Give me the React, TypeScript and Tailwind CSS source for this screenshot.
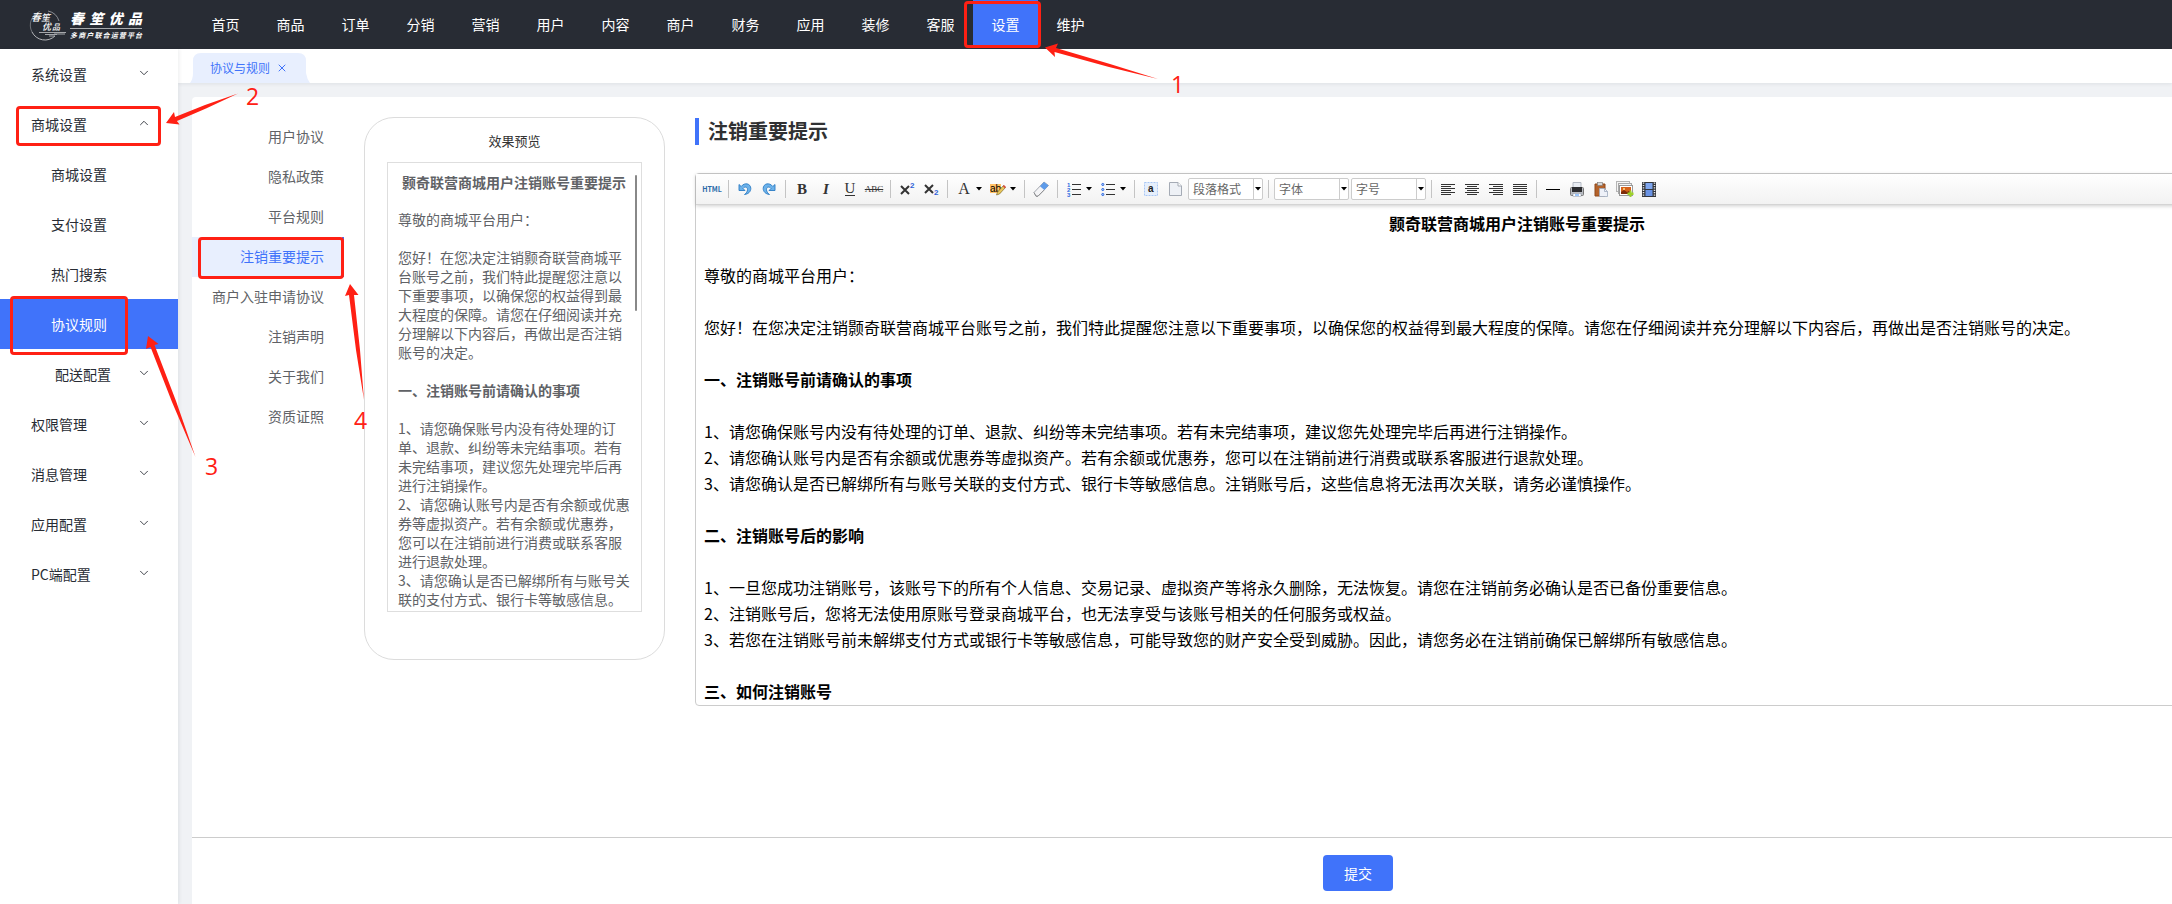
import React from 'react';
import { ChevronDown, ChevronUp, X } from 'lucide-react';

const navItems = ['首页', '商品', '订单', '分销', '营销', '用户', '内容', '商户', '财务', '应用', '装修', '客服', '设置', '维护'];

const sideItems = [
  { label: '系统设置', pad: 'pl-[31px]', arrow: 'down' },
  { label: '商城设置', pad: 'pl-[31px]', arrow: 'up' },
  { label: '商城设置', pad: 'pl-[51px]' },
  { label: '支付设置', pad: 'pl-[51px]' },
  { label: '热门搜索', pad: 'pl-[51px]' },
  { label: '协议规则', pad: 'pl-[51px]', active: true },
  { label: '配送配置', pad: 'pl-[55px]', arrow: 'down' },
  { label: '权限管理', pad: 'pl-[31px]', arrow: 'down' },
  { label: '消息管理', pad: 'pl-[31px]', arrow: 'down' },
  { label: '应用配置', pad: 'pl-[31px]', arrow: 'down' },
  { label: 'PC端配置', pad: 'pl-[31px]', arrow: 'down' },
];

const agreements = ['用户协议', '隐私政策', '平台规则', '注销重要提示', '商户入驻申请协议', '注销声明', '关于我们', '资质证照'];

const previewLines = [
  '尊敬的商城平台用户：',
  '',
  '您好！在您决定注销颢奇联营商城平',
  '台账号之前，我们特此提醒您注意以',
  '下重要事项，以确保您的权益得到最',
  '大程度的保障。请您在仔细阅读并充',
  '分理解以下内容后，再做出是否注销',
  '账号的决定。',
  '',
  '#一、注销账号前请确认的事项',
  '',
  '1、请您确保账号内没有待处理的订',
  '单、退款、纠纷等未完结事项。若有',
  '未完结事项，建议您先处理完毕后再',
  '进行注销操作。',
  '2、请您确认账号内是否有余额或优惠',
  '券等虚拟资产。若有余额或优惠券，',
  '您可以在注销前进行消费或联系客服',
  '进行退款处理。',
  '3、请您确认是否已解绑所有与账号关',
  '联的支付方式、银行卡等敏感信息。',
];

const editorLines = [
  '尊敬的商城平台用户：',
  '',
  '您好！在您决定注销颢奇联营商城平台账号之前，我们特此提醒您注意以下重要事项，以确保您的权益得到最大程度的保障。请您在仔细阅读并充分理解以下内容后，再做出是否注销账号的决定。',
  '',
  '#一、注销账号前请确认的事项',
  '',
  '1、请您确保账号内没有待处理的订单、退款、纠纷等未完结事项。若有未完结事项，建议您先处理完毕后再进行注销操作。',
  '2、请您确认账号内是否有余额或优惠券等虚拟资产。若有余额或优惠券，您可以在注销前进行消费或联系客服进行退款处理。',
  '3、请您确认是否已解绑所有与账号关联的支付方式、银行卡等敏感信息。注销账号后，这些信息将无法再次关联，请务必谨慎操作。',
  '',
  '#二、注销账号后的影响',
  '',
  '1、一旦您成功注销账号，该账号下的所有个人信息、交易记录、虚拟资产等将永久删除，无法恢复。请您在注销前务必确认是否已备份重要信息。',
  '2、注销账号后，您将无法使用原账号登录商城平台，也无法享受与该账号相关的任何服务或权益。',
  '3、若您在注销账号前未解绑支付方式或银行卡等敏感信息，可能导致您的财产安全受到威胁。因此，请您务必在注销前确保已解绑所有敏感信息。',
  '',
  '#三、如何注销账号',
];

function Lines({ lines, className }: { lines: string[]; className: string }) {
  return (
    <>
      {lines.map((line, i) => (
        <p key={i} className={`${className} ${line.startsWith('#') ? 'font-bold' : ''}`}>
          {line.replace('#', '')}
        </p>
      ))}
    </>
  );
}

function Logo() {
  return (
    <a href="#" aria-label="春笙优品" className="flex w-[193px] shrink-0 items-center gap-1 pl-[29px] text-white">
      <svg width="37" height="34" viewBox="0 0 37 34" fill="none">
        <path d="M11 3.5A14.5 14.5 0 0 0 3 24" stroke="#6f7278" strokeWidth="1" />
        <path d="M3 24A14.5 14.5 0 0 0 26 28" stroke="#b5b6ba" strokeWidth="1" />
        <path d="M19 3A14.5 14.5 0 0 1 30 13" stroke="#8b8e94" strokeWidth="1" />
        <g fill="#fff" fontFamily="'Noto Sans CJK SC', sans-serif" fontStyle="italic" fontWeight="500">
          <text x="2" y="13" fontSize="10">春</text>
          <text x="12" y="13" fontSize="9">笙</text>
          <text x="13" y="22" fontSize="9">优</text>
          <text x="23" y="22" fontSize="8">品</text>
        </g>
        <path d="M10 24.5h27M16 26.5h12M20 28h6M25 26h11" stroke="#a5a7ab" strokeWidth="1" />
      </svg>
      <div className="flex w-[72px] flex-col">
        <div className="flex justify-between text-[14px] leading-[16px] font-black italic">
          <span>春</span><span>笙</span><span>优</span><span>品</span>
        </div>
        <div className="my-[2px] h-px bg-[#a9abae]" />
        <div className="flex justify-between text-[7px] leading-[9px] font-bold italic">
          {Array.from('多商户联合运营平台').map((c) => (
            <span key={c}>{c}</span>
          ))}
        </div>
      </div>
    </a>
  );
}

function Tool({ label, children }: { label: string; children: React.ReactNode }) {
  return (
    <button type="button" aria-label={label} title={label} className="flex h-5 w-6 shrink-0 items-center justify-center text-[#333]">
      {children}
    </button>
  );
}

function SplitTool({ label, children }: { label: string; children: React.ReactNode }) {
  return (
    <button type="button" aria-label={label} title={label} className="flex h-5 w-[34px] shrink-0 items-center text-[#333]">
      <span className="flex w-6 justify-center">{children}</span>
      <Caret />
    </button>
  );
}

function Caret() {
  return (
    <svg width="6" height="4" viewBox="0 0 6 4" className="shrink-0">
      <path d="M0 0h6L3 3.5z" fill="#000" />
    </svg>
  );
}

function Sep() {
  return <span className="mx-1 h-[18px] w-px shrink-0 bg-[#c4c4c4]" />;
}

function ToolSelect({ label }: { label: string }) {
  return (
    <span className="relative mx-px h-[22px] w-[75px] shrink-0 rounded-xs border border-[#ccc] bg-white">
      <select aria-label={label} className="block h-5 w-full appearance-none bg-transparent pl-1 text-[12px] leading-5 text-[#666]">
        <option>{label}</option>
      </select>
      <span className="pointer-events-none absolute inset-y-0 right-0 flex w-[9px] items-center justify-center border-l border-[#ccc]">
        <Caret />
      </span>
    </span>
  );
}

function AlignIcon({ kind }: { kind: 'left' | 'center' | 'right' | 'full' }) {
  const x = { left: 0, center: 2, right: 4, full: 0 }[kind];
  const w = kind === 'full' ? 14 : 10;
  return (
    <svg width="14" height="11" viewBox="0 0 14 11" fill="#333">
      {[0, 2, 4, 6, 8, 10].map((y, i) => (
        <rect key={y} x={i % 2 ? x : 0} y={y} width={i % 2 ? w : 14} height="1" />
      ))}
    </svg>
  );
}

function UndoIcon({ flip }: { flip?: boolean }) {
  return (
    <svg width="14" height="14" viewBox="0 0 14 14" className={flip ? '-scale-x-100' : ''}>
      <path
        d="M1 2.5v6h6L5 6.5C6.5 4.5 9.5 4.5 9.5 7.5C9.5 9.5 8.5 11 6.5 12.5C10.5 12 12.8 9.5 12.8 6.5C12.8 1.5 6.5 0 3.2 4.5z"
        fill="#6cb2ea"
        stroke="#2b7cc4"
        strokeWidth="0.9"
        strokeLinejoin="round"
      />
    </svg>
  );
}

function Toolbar() {
  return (
    <div className="flex h-[31px] items-center border-b border-[#d4d4d4] bg-linear-to-b from-white to-[#f2f2f2] pl-1 shadow-[0_1px_4px_rgba(0,0,0,0.2)]">
      <Tool label="源代码"><span className="text-[7px] leading-none font-bold text-[#2a6aa8]">HTML</span></Tool>
      <Sep />
      <Tool label="撤销"><UndoIcon /></Tool>
      <Tool label="重做"><UndoIcon flip /></Tool>
      <Sep />
      <Tool label="加粗"><span className="font-['Liberation_Serif',serif] text-[15px] leading-5 font-bold">B</span></Tool>
      <Tool label="斜体"><span className="font-['Liberation_Serif',serif] text-[15px] leading-5 font-bold italic">I</span></Tool>
      <Tool label="下划线"><span className="border-b border-[#333] font-['Liberation_Serif',serif] text-[15px] leading-[13px]">U</span></Tool>
      <Tool label="删除线"><span className="font-['Liberation_Serif',serif] text-[9px] leading-5 line-through">ABC</span></Tool>
      <Sep />
      <Tool label="上标">
        <svg width="16" height="16" viewBox="0 0 16 16">
          <path d="M2 5l8 8M10 5l-8 8" stroke="#333" strokeWidth="2" />
          <text x="11" y="7" fontSize="8" fontWeight="700" fill="#2f5fd8" fontFamily="'Liberation Sans', sans-serif">2</text>
        </svg>
      </Tool>
      <Tool label="下标">
        <svg width="16" height="16" viewBox="0 0 16 16">
          <path d="M2 4l8 8M10 4l-8 8" stroke="#333" strokeWidth="2" />
          <text x="11" y="14" fontSize="8" fontWeight="700" fill="#2f5fd8" fontFamily="'Liberation Sans', sans-serif">2</text>
        </svg>
      </Tool>
      <Sep />
      <SplitTool label="字体颜色"><span className="font-['Liberation_Serif',serif] text-[16px] leading-5">A</span></SplitTool>
      <SplitTool label="背景色">
        <svg width="16" height="16" viewBox="0 0 16 16">
          <rect x="0" y="3" width="11" height="9" fill="#ffc166" />
          <text x="0" y="11" fontSize="10" fill="#000" fontFamily="'Liberation Sans', sans-serif">ab</text>
          <path d="M6.5 14l1-3 6-6.500 2 2-6 6.500z" fill="#e8c65a" stroke="#6b5a22" strokeWidth="0.6" />
          <path d="M12.8 5.2l1.200-1.200 2 2-1.200 1.200z" fill="#d9493f" />
        </svg>
      </SplitTool>
      <Sep />
      <Tool label="清除格式">
        <svg width="16" height="16" viewBox="0 0 16 16">
          <path d="M1 11.5L11 1l4.500 3.500L5 15.200H3z" fill="#f4f4f6" stroke="#8a8f98" strokeWidth="0.8" />
          <path d="M7 5.2L11 1l4.500 3.500-4.200 4.500z" fill="#5d9bea" />
          <path d="M1 11.5L3 15.200H5l6-6" fill="none" stroke="#888" strokeWidth="0.8" />
        </svg>
      </Tool>
      <Sep />
      <SplitTool label="有序列表">
        <svg width="14" height="15" viewBox="0 0 14 15">
          <g fill="#2f6be0" fontSize="6" fontWeight="700" fontFamily="'Liberation Sans', sans-serif">
            <text x="0" y="5">1</text>
            <text x="0" y="10">2</text>
            <text x="0" y="15">3</text>
          </g>
          <path d="M5 2.5h9M5 7.5h9M5 12.5h9" stroke="#333" />
        </svg>
      </SplitTool>
      <SplitTool label="无序列表">
        <svg width="14" height="15" viewBox="0 0 14 15">
          <g fill="#a9c6f8" stroke="#2f6be0">
            <circle cx="1.8" cy="2.5" r="1.1" />
            <circle cx="1.8" cy="7.5" r="1.1" />
            <circle cx="1.8" cy="12.5" r="1.1" />
          </g>
          <path d="M5 2.5h9M5 7.5h9M5 12.5h9" stroke="#333" />
        </svg>
      </SplitTool>
      <Sep />
      <Tool label="全选">
        <svg width="14" height="14" viewBox="0 0 14 14">
          <rect x="0.5" y="0.5" width="13" height="13" fill="#e6effc" stroke="#a9c7f5" strokeDasharray="2 1" />
          <text x="4" y="10" fontSize="10" fontWeight="700" fill="#222" fontFamily="'Liberation Sans', sans-serif">a</text>
        </svg>
      </Tool>
      <Tool label="清空文档">
        <svg width="13" height="14" viewBox="0 0 13 14">
          <path d="M0.5 0.5h8.500l3.500 3.500v9.500h-12z" fill="#eef1f6" stroke="#a5abb5" />
          <path d="M9 0.5v3.500h3.500" fill="#fff" stroke="#a5abb5" />
        </svg>
      </Tool>
      <ToolSelect label="段落格式" />
      <Sep />
      <ToolSelect label="字体" />
      <ToolSelect label="字号" />
      <Sep />
      <Tool label="居左对齐"><AlignIcon kind="left" /></Tool>
      <Tool label="居中对齐"><AlignIcon kind="center" /></Tool>
      <Tool label="居右对齐"><AlignIcon kind="right" /></Tool>
      <Tool label="两端对齐"><AlignIcon kind="full" /></Tool>
      <Sep />
      <Tool label="分隔线"><span className="h-px w-[14px] bg-black" /></Tool>
      <Tool label="打印">
        <svg width="14" height="15" viewBox="0 0 14 15">
          <path d="M3 0.5h8v5h-8z" fill="#e9edf3" stroke="#b4bac4" />
          <rect x="0.5" y="5.5" width="13" height="8" rx="1" fill="#b9bcc2" stroke="#777" />
          <rect x="2" y="5" width="10" height="5" fill="#2c2d30" />
          <rect x="3" y="11.5" width="8" height="3" fill="#fff" stroke="#8a94a5" strokeWidth="0.5" />
          <rect x="5" y="12.5" width="4" height="1" fill="#3d8df5" />
        </svg>
      </Tool>
      <Tool label="粘贴">
        <svg width="14" height="15" viewBox="0 0 14 15">
          <path d="M1 2h10v12h-10z" fill="#b4622a" stroke="#8f481b" />
          <rect x="3.5" y="0.5" width="5" height="3" fill="#d9d9d9" stroke="#777" strokeWidth="0.6" />
          <path d="M5.5 6.5h5l3 3v5h-8z" fill="#eef1f8" stroke="#9da9bd" strokeWidth="0.8" />
          <path d="M10.5 6.5v3h3" fill="none" stroke="#9da9bd" strokeWidth="0.8" />
        </svg>
      </Tool>
      <Tool label="图片">
        <svg width="18" height="16" viewBox="0 0 18 16">
          <rect x="0.5" y="0.5" width="13" height="10" fill="#f4f4f4" stroke="#b5b5b5" />
          <rect x="2.5" y="2.5" width="13" height="10" fill="#f4f4f4" stroke="#a8a8a8" />
          <rect x="3.5" y="4.5" width="13" height="10" fill="#fff" stroke="#999" />
          <rect x="5" y="6" width="10" height="7" fill="#d5611b" />
          <path d="M5 13v-2l3-2 3 2 2-1 2 1v2z" fill="#7d2c0b" />
          <circle cx="8" cy="8" r="1" fill="#ffe08a" />
          <path d="M13.5 9.5h2v2h2v2.500h-2v2h-2v-2h-2v-2.500h2z" fill="#9ed22b" />
        </svg>
      </Tool>
      <Tool label="视频">
        <svg width="14" height="15" viewBox="0 0 14 15">
          <rect x="0" y="0" width="14" height="15" fill="#33363c" />
          <rect x="3.5" y="1" width="7" height="6" fill="#7fa6ee" />
          <rect x="3.5" y="8" width="7" height="6" fill="#6a93e4" />
          <path d="M1.5 0.5v14M12.5 0.5v14" stroke="#e8e8e8" strokeWidth="1.5" strokeDasharray="1.2 1.2" />
        </svg>
      </Tool>
    </div>
  );
}

/* Numbered steps drawn on top of the page */
function Guide() {
  return (
    <div className="pointer-events-none absolute top-0 left-0 z-20">
      <div className="absolute top-[1px] left-[964px] h-[47px] w-[77px] rounded-sm border-3 border-[#ff2014]" />
      <div className="absolute top-[106px] left-[16px] h-[40px] w-[145px] rounded-sm border-3 border-[#ff2014]" />
      <div className="absolute top-[296px] left-[10px] h-[59px] w-[118px] rounded-sm border-3 border-[#ff2014]" />
      <div className="absolute top-[237px] left-[198px] h-[42px] w-[146px] rounded-sm border-3 border-[#ff2014]" />
      <svg width="1200" height="500" viewBox="0 0 1200 500" className="max-w-none" fill="#ff2014">
        <path d="M1045 47.5L1058 43.5L1056 48L1110 64L1158 79L1109 67L1054.5 52L1055 57z" />
        <path d="M166 123L174 112L175 117L205 105L238 93.5L206 108.5L177 121L179.5 124.5z" />
        <path d="M148 336L158.5 344L154.5 345L176 401L195.5 457L172 402L150.5 347L146 349z" />
        <path d="M350 284L358.5 295L354 295L360 350L364 400L356 350L349 295L345 296z" />
        <g fontSize="23" fontFamily="'Open Sans', 'Noto Sans', sans-serif">
          <text x="1171" y="93">1</text>
          <text x="246" y="105">2</text>
          <text x="205" y="475">3</text>
          <text x="354" y="429">4</text>
        </g>
      </svg>
    </div>
  );
}

export default function App() {
  return (
    <div className="relative flex min-h-screen flex-col overflow-hidden bg-[#f0f2f5] font-['Noto_Sans_CJK_SC',sans-serif] text-[14px] text-[#303133]">
      {/* Top navigation */}
      <header className="flex h-[49px] bg-[#282c34]">
        <Logo />
        <nav className="flex">
          {navItems.map((item) => (
            <a
              key={item}
              href="#"
              className={`flex h-12 w-[65px] items-center justify-center text-white ${item === '设置' ? 'bg-[#4073fa]' : ''}`}
            >
              {item}
            </a>
          ))}
        </nav>
      </header>

      <div className="flex flex-1">
        {/* Sidebar */}
        <aside className="z-10 w-[178px] shrink-0 bg-white shadow-[1px_0_4px_rgba(0,21,41,0.08)]">
          {sideItems.map((item, i) => (
            <a
              key={i}
              href="#"
              className={`flex h-[50px] items-center justify-between pr-[27px] ${item.pad} ${item.active ? 'bg-[#4073fa] text-white' : 'text-[#282c34]'}`}
            >
              {item.label}
              {item.arrow === 'down' && <ChevronDown className="mb-0.5 h-[14px] w-[14px]" strokeWidth={1.5} />}
              {item.arrow === 'up' && <ChevronUp className="mb-0.5 h-[14px] w-[14px]" strokeWidth={1.5} />}
            </a>
          ))}
        </aside>

        <main className="flex min-w-0 flex-1 flex-col overflow-hidden">
          {/* Opened tabs */}
          <div className="flex h-[34px] items-end bg-white pl-3 shadow-[0_1px_4px_rgba(0,21,41,0.08)]">
            <div className="relative flex h-[30px] w-[120px] items-center gap-1.5 pl-5 text-[12px] text-[#4073fa]">
              <svg className="absolute inset-0" width="120" height="30" viewBox="0 0 120 30" fill="#e8effe">
                <path d="M0 30Q3 26 3 20V8Q3 0 11 0H108Q116 0 116 8V20Q117 26 120 30z" />
              </svg>
              <a href="#" className="relative">协议与规则</a>
              <button type="button" aria-label="关闭" className="relative">
                <X className="h-3 w-3" strokeWidth={2} />
              </button>
            </div>
          </div>

          <div className="flex w-[calc(100%+366px)] flex-1 flex-col px-[14px] pt-[14px]">
            <div className="flex flex-1 flex-col rounded-t bg-white">
              <div className="flex flex-1 pt-5 pr-[185px]">
                {/* Agreement list */}
                <nav className="flex w-[152px] shrink-0 flex-col">
                  {agreements.map((name) => (
                    <a
                      key={name}
                      href="#"
                      className={`flex h-10 items-center justify-end border-r-2 pr-[18px] pb-0.5 ${
                        name === '注销重要提示' ? 'border-[#4073fa] bg-[#e8effe] text-[#4073fa]' : 'border-transparent text-[#606266]'
                      }`}
                    >
                      {name}
                    </a>
                  ))}
                </nav>

                {/* Phone preview */}
                <section className="ml-5 h-[543px] w-[301px] shrink-0 rounded-[30px] border border-[#dcdcdc] px-[22px]">
                  <h2 className="pt-[13px] pb-[11px] text-center text-[13px] leading-5 text-[#333]">效果预览</h2>
                  <div className="flex h-[450px] w-[255px] justify-between overflow-hidden border border-[#dedede] pt-[10px] pr-[4px] pl-[10px] text-[#606266]">
                    <div className="w-[232px] shrink-0">
                      <p className="mb-[18px] text-center leading-[19px] font-bold whitespace-nowrap">颢奇联营商城用户注销账号重要提示</p>
                      <Lines lines={previewLines} className="min-h-[19px] leading-[19px] whitespace-nowrap" />
                    </div>
                    <div className="mt-0.5 h-[136px] w-[2px] rounded bg-[#888]" />
                  </div>
                </section>

                {/* Editor */}
                <section className="ml-[30px] min-w-0 flex-1">
                  <h1 className="mt-px flex h-[27px] items-center border-l-4 border-[#4073fa] pb-0.5 pl-[9px] text-[20px] leading-[25px] font-bold">
                    注销重要提示
                  </h1>
                  <div className="mt-[28px] rounded-sm border border-[#ccc]">
                    <Toolbar />
                    <div
                      role="textbox"
                      aria-label="协议内容"
                      contentEditable
                      suppressContentEditableWarning
                      className="h-[500px] overflow-hidden px-2 pt-[5px] text-[16px] text-black"
                    >
                      <p className="mb-[26px] text-center leading-[26px] font-bold">颢奇联营商城用户注销账号重要提示</p>
                      <Lines lines={editorLines} className="min-h-[26px] leading-[26px]" />
                    </div>
                  </div>
                </section>
              </div>

              <footer className="flex justify-center border-t border-[#ccc] pt-[17px] pb-[13px]">
                <button type="button" className="h-9 w-[70px] rounded bg-[#4073fa] text-white">提交</button>
              </footer>
            </div>
          </div>
        </main>
      </div>

      <Guide />
    </div>
  );
}
